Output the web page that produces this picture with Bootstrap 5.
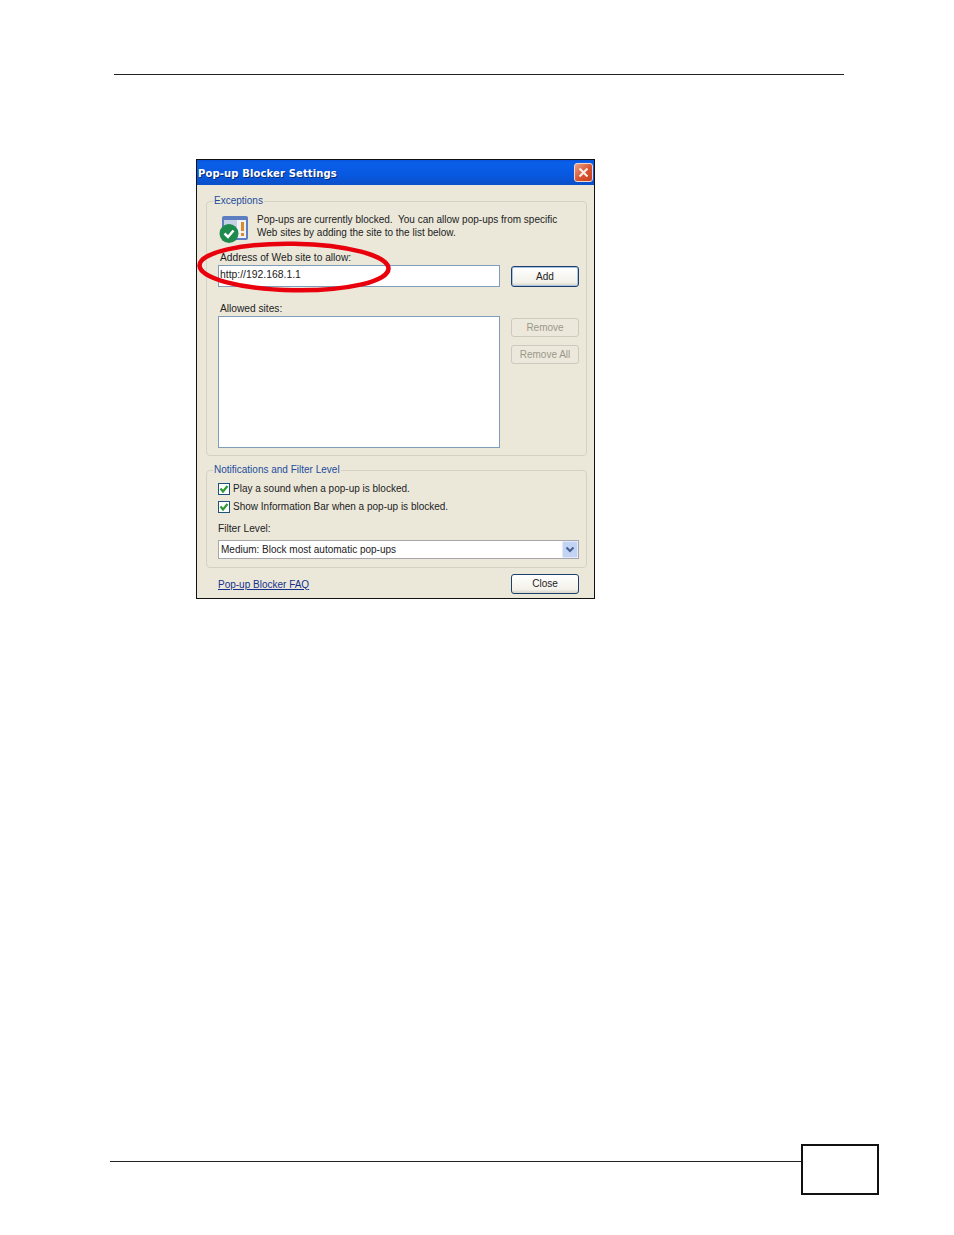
<!DOCTYPE html>
<html lang="en">
<head>
<meta charset="utf-8">
<title>Pop-up Blocker Settings</title>
<link href="https://cdn.jsdelivr.net/npm/bootstrap@5.3.0/dist/css/bootstrap.min.css" rel="stylesheet">
<style>
html,body{background:#fff;margin:0}
body{width:954px;height:1235px;overflow:hidden;font-family:"Liberation Sans",Arial,sans-serif;font-size:10px;color:#222}
.head-rule{margin:74px 0 0 114px;width:730px;height:1px;background:#222}
.xp-win{position:relative;margin:84px 0 0 196px;width:399px;height:440px;border:1px solid #111;background:#ebe8da}
.xp-title{height:25px;padding:0 1px;background:linear-gradient(180deg,#0a54dc 0,#0a5fe8 12%,#0858e0 60%,#0a50c8 100%)}
.xp-title-text{padding-top:2px;font-family:"DejaVu Sans",sans-serif;font-weight:700;font-size:10px;color:#fff;text-shadow:1px 1px 0 #0a2a78;letter-spacing:.13px;white-space:nowrap}
.xp-x{width:19px;height:19px;border:1px solid #f4d8cc;border-radius:3px;background:linear-gradient(135deg,#e9a48c,#d8532f 55%,#c8401e)}
.xp-body{padding:9px 7px 0 9px}
.xp-group{margin:0;padding:0 7px 0 11px;border:1px solid #d6d2c2;border-radius:4px;min-width:0}
.xp-legend{float:none;width:auto;margin:0 0 0 -5px;padding:0 1px;font-size:10px;line-height:14px;color:#1c4c9c}
.grp-a{height:262px}
.grp-b{height:105px;margin-top:7px}
.intro{height:43px;padding:6px 0 0 1px;gap:9px}
.intro-icon{margin-top:2px;flex:none}
.intro-copy{line-height:12.5px;font-size:10px;white-space:nowrap}
.lbl{display:block;margin:1px 0 0 2px;line-height:12px;font-size:10.2px}
.lbl-allowed{margin-top:16px}
.lbl-filter{margin:10px 0 0}
.xp-input,.xp-list{border:1px solid #7f9db9;border-radius:0;background:#fff;width:282px}
.xp-input{height:22px;padding:0 1px 3px;margin-top:1px;font-family:inherit;font-size:10.4px;line-height:18px;color:#222;min-height:0}
.xp-list{height:132px;margin-top:1px}
.xp-btn{display:block;width:68px;padding:0;border-radius:3px;font-size:10px;color:#222;background:linear-gradient(180deg,#fff,#f2f1ea 80%,#d8d5c8);border:1px solid #1d3f6e;line-height:1}
.xp-btn.off{height:19px;color:#9b988a;border-color:#cdcabb;background:#ece9dc;opacity:1}
.b-add{height:21px;margin-top:2px;box-shadow:inset 0 0 0 1px #a9c1e2}
.b-close{height:20px}
.stack{gap:8px;margin-top:3px}
.row-gap{gap:11px}
.chk{margin:6px 0 0;height:12px}
.chk + .chk{margin-top:6px}
.xp-chk.form-check-input[type=checkbox]{float:none;margin:0 3px 0 0;width:12px;height:12px;border:1px solid #1c5180;border-radius:0;flex:none;background-color:#fff;background-image:url("data:image/svg+xml,%3Csvg xmlns='http://www.w3.org/2000/svg' viewBox='0 0 12 12'%3E%3Cpath d='M2.500 5.500 5 8.500 9.500 3' fill='none' stroke='%232f9a35' stroke-width='2.200'/%3E%3C/svg%3E");background-size:12px 12px}
.chk-text{line-height:12px;font-size:10px;white-space:nowrap}
.xp-sel{height:19px;width:361px;padding:0 0 0 2px;margin-top:5px;border:1px solid #a7a6aa;border-radius:0;font-family:inherit;font-size:10px;color:#222;min-height:0;line-height:17px;background-color:#fff;background-repeat:no-repeat;background-position:right 0 top 0;background-size:16px 17px;background-image:url("data:image/svg+xml,%3Csvg xmlns='http://www.w3.org/2000/svg' viewBox='0 0 16 17'%3E%3Crect x='.5' y='.5' width='15' height='16' rx='1' fill='%23c3d3f4' stroke='%23e2e9fa'/%3E%3Cpath d='M4.500 6.500 8 10l3.500-3.500' fill='none' stroke='%23455f8f' stroke-width='2'/%3E%3C/svg%3E")}
.foot-row{margin-top:6px;padding:0 8px 0 12px}
.faq{font-size:10px;color:#15308f}
.ring{position:absolute;left:0;top:80px;width:196px;height:54px;pointer-events:none}
.foot-wrap{margin:545px 0 0 110px;align-items:flex-start}
.foot-rule{width:691px;height:1px;margin-top:17px;background:#222}
.page-box{width:78px;height:51px;border:2px solid #111}
</style>
</head>
<body>
<div class="head-rule"></div>

<div class="xp-win">
  <div class="xp-title d-flex align-items-center justify-content-between">
    <span class="xp-title-text">Pop-up Blocker Settings</span>
    <span class="xp-x d-flex align-items-center justify-content-center">
      <svg width="11" height="11" viewBox="0 0 11 11"><path d="M1.500 1.500 9.500 9.500M9.500 1.500 1.500 9.500" stroke="#fbeee8" stroke-width="2.200"/></svg>
    </span>
  </div>

  <div class="xp-body">
    <fieldset class="xp-group grp-a">
      <legend class="xp-legend">Exceptions</legend>
      <div class="intro d-flex">
        <svg class="intro-icon" width="29" height="27" viewBox="0 0 29 27">
          <rect x="3" y="0" width="26" height="24" rx="2" fill="#5d7fc2"/>
          <rect x="5" y="4" width="22" height="18" fill="#eef1f6"/>
          <rect x="5" y="4" width="13" height="15" fill="#c5d2e6"/>
          <rect x="22" y="6" width="3" height="9" fill="#dc8a2a"/>
          <rect x="22" y="17" width="3" height="3" fill="#dc8a2a"/>
          <circle cx="10" cy="17.500" r="9.500" fill="#1e8a4c"/>
          <path d="M5.500 17.500l3.500 3.500 5.500-6.500" fill="none" stroke="#fff" stroke-width="2.500"/>
        </svg>
        <div class="intro-copy">Pop-ups are currently blocked.&nbsp; You can allow pop-ups from specific<br>Web sites by adding the site to the list below.</div>
      </div>
      <label class="lbl" for="addr">Address of Web site to allow:</label>
      <div class="d-flex row-gap">
        <input id="addr" class="form-control xp-input" value="http://192.168.1.1">
        <button class="btn xp-btn b-add" type="button">Add</button>
      </div>
      <div class="lbl lbl-allowed">Allowed sites:</div>
      <div class="d-flex row-gap">
        <div class="xp-list"></div>
        <div class="d-flex flex-column stack">
          <button class="btn xp-btn off" type="button">Remove</button>
          <button class="btn xp-btn off" type="button">Remove All</button>
        </div>
      </div>
    </fieldset>

    <fieldset class="xp-group grp-b">
      <legend class="xp-legend">Notifications and Filter Level</legend>
      <div class="chk d-flex align-items-center">
        <input class="form-check-input xp-chk" type="checkbox" checked aria-label="Play a sound"><span class="chk-text">Play a sound when a pop-up is blocked.</span>
      </div>
      <div class="chk d-flex align-items-center">
        <input class="form-check-input xp-chk" type="checkbox" checked aria-label="Show Information Bar"><span class="chk-text">Show Information Bar when a pop-up is blocked.</span>
      </div>
      <div class="lbl lbl-filter">Filter Level:</div>
      <select class="form-select xp-sel" aria-label="Filter Level"><option>Medium: Block most automatic pop-ups</option></select>
    </fieldset>

    <div class="foot-row d-flex align-items-center justify-content-between">
      <a href="#" class="faq">Pop-up Blocker FAQ</a>
      <button class="btn xp-btn b-close" type="button">Close</button>
    </div>
  </div>

  <svg class="ring" viewBox="0 0 196 54"><ellipse cx="97" cy="27" rx="94.500" ry="23.300" fill="none" stroke="#e9000d" stroke-width="4.500" transform="rotate(1 97 27)"/></svg>
</div>

<div class="foot-wrap d-flex">
  <div class="foot-rule"></div>
  <div class="page-box"></div>
</div>
</body>
</html>
